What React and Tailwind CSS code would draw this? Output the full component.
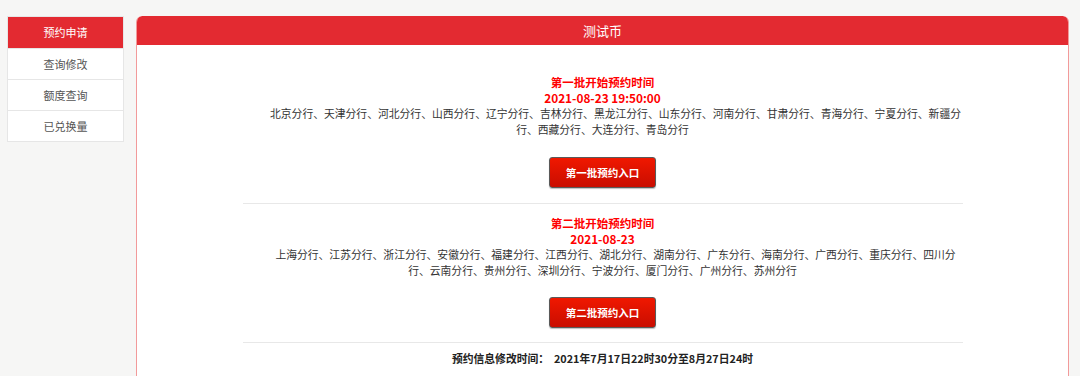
const FONT = { fontFamily: '"Microsoft YaHei", "Noto Sans CJK SC", "Noto Sans", sans-serif' }

const NAV = ['预约申请', '查询修改', '额度查询', '已兑换量']

const BATCHES = [
  {
    title: '第一批开始预约时间',
    date: '2021-08-23 19:50:00',
    branches:
      '北京分行、天津分行、河北分行、山西分行、辽宁分行、吉林分行、黑龙江分行、山东分行、河南分行、甘肃分行、青海分行、宁夏分行、新疆分行、西藏分行、大连分行、青岛分行',
    button: '第一批预约入口',
  },
  {
    title: '第二批开始预约时间',
    date: '2021-08-23',
    branches:
      '上海分行、江苏分行、浙江分行、安徽分行、福建分行、江西分行、湖北分行、湖南分行、广东分行、海南分行、广西分行、重庆分行、四川分行、云南分行、贵州分行、深圳分行、宁波分行、厦门分行、广州分行、苏州分行',
    button: '第二批预约入口',
  },
]

// ── Sidebar ─────────────────────────────────────────────────
function Sidebar() {
  return (
    <div className="w-[117px] shrink-0 border border-[#e6e6e6] bg-white self-start">
      {NAV.map((item, i) => (
        <div
          key={item}
          className={
            i === 0
              ? 'h-[31px] flex items-center justify-center bg-[#e32a31] text-white text-[11px]'
              : 'h-[31px] flex items-center justify-center border-t border-[#e6e6e6] text-[#555] text-[11px]'
          }
        >
          {item}
        </div>
      ))}
    </div>
  )
}

// ── Batch block ─────────────────────────────────────────────
function Batch({ title, date, branches, button, first }) {
  return (
    <div className={first ? 'flex flex-col items-center pt-[30px]' : 'flex flex-col items-center pt-[12px]'}>
      <div className="text-[11.5px] leading-[15px] font-bold text-[#f00]">{title}</div>
      <div className="text-[11.8px] leading-[15px] font-bold text-[#f00]">{date}</div>
      <p className="w-[720px] indent-[26px] text-center text-[10.8px] leading-[16px] text-[#333]">{branches}</p>
      <button className={(first ? 'mt-[20px]' : 'mt-[19px]') + ' w-[107px] h-[31px] rounded-[3px] border border-[#5a5a5a] bg-gradient-to-b from-[#f01800] to-[#c90d00] text-white text-[10.5px] font-bold shadow-[0_1px_1px_rgba(0,0,0,0.25)]'}>
        {button}
      </button>
      <div className={(first ? 'mt-[15px]' : 'mt-[14px]') + ' w-[720px] h-px bg-[#e8e8e8]'} />
    </div>
  )
}

export default function App() {
  return (
    <div className="min-h-screen bg-[#f6f6f5] pl-[7px] pr-[11px] pt-[16px] flex gap-[12px]" style={FONT}>
      <Sidebar />
      <div className="flex-1 rounded-t-[6px] border-x border-[#f29a9a] bg-white pb-10 overflow-hidden">
        <div className="h-[29px] -mx-px bg-[#e32a31] rounded-t-[6px] flex items-center justify-center text-white text-[13px]">
          测试币
        </div>
        <div className="flex flex-col items-center">
          {BATCHES.map((b, i) => (
            <Batch key={b.title} {...b} first={i === 0} />
          ))}
          <div className="mt-[8px] text-[10.8px] leading-[15px] font-bold text-[#222]">
            预约信息修改时间：&nbsp;&nbsp;2021年7月17日22时30分至8月27日24时
          </div>
        </div>
      </div>
    </div>
  )
}
